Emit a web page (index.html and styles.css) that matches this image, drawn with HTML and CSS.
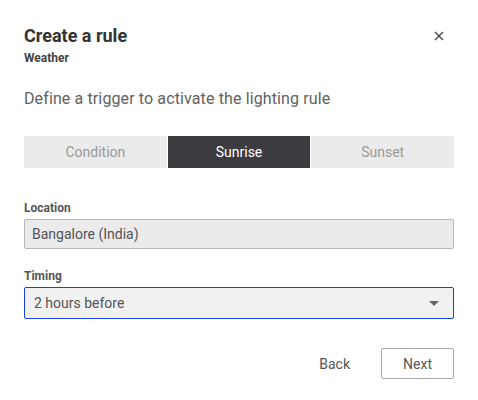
FILE: index.html
```html
<!DOCTYPE html>
<html>
<head>
<meta charset="utf-8">
<link rel="stylesheet" href="styles.css">
</head>
<body>
<div class="dialog">
  <div class="header">
    <div>
      <h1 class="title">Create a rule</h1>
      <div class="subtitle">Weather</div>
    </div>
    <button class="close" aria-label="Close">
      <svg width="10" height="10" viewBox="0 0 10 10"><path d="M1 1L9 9M9 1L1 9" stroke="#444" stroke-width="1.4"/></svg>
    </button>
  </div>
  <p class="lead">Define a trigger to activate the lighting rule</p>
  <div class="tabs">
    <div class="tab">Condition</div>
    <div class="tab active">Sunrise</div>
    <div class="tab">Sunset</div>
  </div>
  <div class="field">
    <div class="label">Location</div>
    <div class="input">Bangalore (India)</div>
  </div>
  <div class="field timing">
    <div class="label">Timing</div>
    <div class="input select">2 hours before
      <svg class="caret" width="10" height="5" viewBox="0 0 10 5"><path d="M0 0H10L5 5Z" fill="#666"/></svg>
    </div>
  </div>
  <div class="actions">
    <button class="btn text">Back</button>
    <button class="btn outline">Next</button>
  </div>
</div>
</body>
</html>
```
FILE: styles.css
```css
* { box-sizing: border-box; }
body { margin: 0; background: #fff; font-family: Roboto, "Liberation Sans", sans-serif; color: #333; }
.dialog { width: 478px; padding: 24px 24px 0 24px; }
.header { display: flex; justify-content: space-between; align-items: flex-start; }
.title { margin: 0; font-size: 18px; font-weight: 700; line-height: 24px; color: #333; }
.subtitle { font-size: 12px; font-weight: 700; color: #444; line-height: 14px; margin-top: 3px; }
.close { background: none; border: 0; padding: 0; margin: 7px 10px 0 0; width: 10px; height: 10px; display: flex; }
.lead { margin: 24px 0 0 0; font-size: 16px; letter-spacing: 0.12px; line-height: 20px; color: #626262; }
.tabs { display: flex; gap: 1px; margin-top: 27px; }
.tab { flex: 1; height: 32px; background: #ebebeb; color: #999; font-size: 14px; display: flex; align-items: center; justify-content: center; }
.tab.active { background: #3c3b40; color: #fff; }
.field { margin-top: 33px; }
.field.timing { margin-top: 20px; }
.label { font-size: 12px; font-weight: 700; color: #555; line-height: 14px; margin-bottom: 4px; }
.input { height: 30px; border: 1px solid #b8b8b8; border-radius: 2px; background: #ebebeb; font-size: 14px; color: #555; padding: 0 7px; display: flex; align-items: center; }
.select { height: 32px; border-color: #1b3fe6; background: #f1f1f1; padding: 0 9px; justify-content: space-between; }
.caret { margin-right: 5px; }
.actions { display: flex; justify-content: flex-end; align-items: center; gap: 15px; margin-top: 29px; }
.btn { font-family: Roboto, "Liberation Sans", sans-serif; font-size: 14px; color: #555; height: 31px; border-radius: 2px; cursor: pointer; }
.btn.text { background: none; border: 0; padding: 0 16px; }
.btn.outline { background: #fff; border: 1px solid #a8a8a8; width: 73px; }
```
